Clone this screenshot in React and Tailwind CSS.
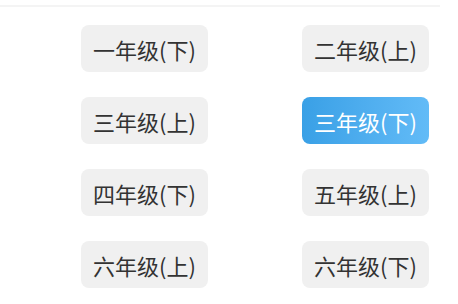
const grades = [
  ['一年级(下)', false],
  ['二年级(上)', false],
  ['三年级(上)', false],
  ['三年级(下)', true],
  ['四年级(下)', false],
  ['五年级(上)', false],
  ['六年级(上)', false],
  ['六年级(下)', false],
];

export default function App() {
  return (
    <div
      className="w-[458px] h-[304px] bg-white overflow-hidden"
      style={{ fontFamily: '"Noto Sans CJK SC", "Noto Sans", sans-serif' }}
    >
      <div className="pt-[5px]">
        <div className="w-[440px] h-[2px] bg-[#f4f4f4]" />
      </div>
      <div className="grid grid-cols-[127px_127px] gap-x-[94px] gap-y-[25px] pl-[81px] pt-[18px]">
        {grades.map(([label, active]) => (
          <button
            key={label}
            className={`h-[47px] rounded-lg flex items-center justify-center text-[22px] leading-none ${
              active
                ? 'bg-gradient-to-r from-[#39a0e6] to-[#62bbf7] text-white'
                : 'bg-[#f0f0f0] text-[#333]'
            }`}
          >
            {label}
          </button>
        ))}
      </div>
    </div>
  );
}
